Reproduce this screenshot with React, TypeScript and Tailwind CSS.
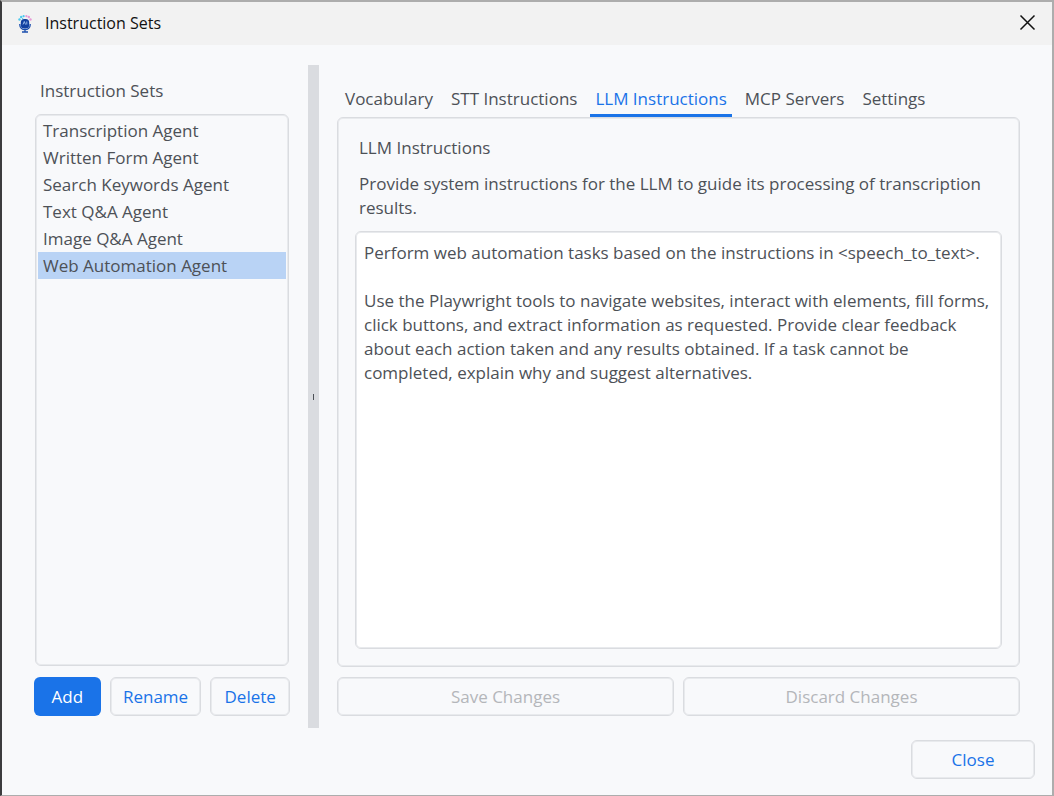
import { useState } from "react";

const agents = [
  "Transcription Agent",
  "Written Form Agent",
  "Search Keywords Agent",
  "Text Q&A Agent",
  "Image Q&A Agent",
  "Web Automation Agent",
];

const tabs = ["Vocabulary", "STT Instructions", "LLM Instructions", "MCP Servers", "Settings"];

const instructions = `Perform web automation tasks based on the instructions in <speech_to_text>.

Use the Playwright tools to navigate websites, interact with elements, fill forms, click buttons, and extract information as requested. Provide clear feedback about each action taken and any results obtained. If a task cannot be completed, explain why and suggest alternatives.`;

function MicIcon() {
  return (
    <svg width="14" height="18" viewBox="0 0 14 18" fill="none" aria-hidden="true">
      <g fill="#4cc9ee">
        <circle cx="1.5" cy="4.5" r="1.2" />
        <circle cx="3.2" cy="2" r="1.2" />
        <circle cx="5.6" cy="1.2" r="1.1" />
        <circle cx="4.6" cy="3.6" r="0.7" />
      </g>
      <g fill="#e79ad6">
        <circle cx="8.4" cy="1.2" r="1.1" />
        <circle cx="10.8" cy="2" r="1.2" />
        <circle cx="12.5" cy="4.5" r="1.2" />
      </g>
      <rect x="2.8" y="4" width="8.4" height="9.6" rx="3.6" fill="#1240a0" />
      <path d="M1.8 9v0.700c0 2.800 2.200 4.800 5.200 4.800s5.200-2 5.200-4.800V9M7 14.500V17M4 17h6" stroke="#1c4fae" strokeWidth="1.300" />
      <path d="M5 9.500 6.300 6.500 7.500 9.500M8.800 6.500v3" stroke="#b5d3fa" strokeWidth="0.800" />
    </svg>
  );
}

export default function App() {
  const [agent, setAgent] = useState("Web Automation Agent");
  const [tab, setTab] = useState("LLM Instructions");
  const outline = "h-[39px] rounded-md border border-[#dadce0] shadow-[inset_0_0_0_1px_#e8eaed]";

  return (
    <div className="flex min-h-screen flex-col border-x-2 border-t-2 border-b border-[#adadad] border-l-[#3c3c3e] bg-[#f8f9fb] font-['Open_Sans',sans-serif] text-[17px] leading-6 text-[#4d5157]">
      <header className="flex h-[43px] shrink-0 items-center bg-[#f2f2f2] px-4">
        <MicIcon />
        <h1 className="ml-[13px] pb-0.5 text-base text-[#111111]">Instruction Sets</h1>
        <button type="button" aria-label="Close window" className="ml-auto pb-0.5 text-[#111111]">
          <svg width="17" height="17" viewBox="0 0 17 17" fill="none" stroke="currentColor" strokeWidth="1.500">
            <path d="M1.500 1.500 15.500 15.500M15.500 1.500 1.500 15.500" />
          </svg>
        </button>
      </header>

      <main className="flex flex-1 pt-5 pr-8 pl-8">
        <section className="flex w-64 shrink-0 flex-col pt-3.5 pb-3">
          <h2 id="sets" className="pl-1.5">Instruction Sets</h2>
          <ul aria-labelledby="sets" className="mt-[11px] mr-px ml-px flex-1 rounded-md border border-[#dadce0] px-0.5 pt-0.5 shadow-[inset_0_0_0_1px_#e8eaed]">
            {agents.map((name) => (
              <li key={name}>
                <button
                  type="button"
                  onClick={() => setAgent(name)}
                  className={`block h-[27px] w-full pl-[5px] text-left ${name === agent ? "bg-[#b9d3f5]" : ""}`}
                >
                  {name}
                </button>
              </li>
            ))}
          </ul>
          <div className="mt-[11px] flex gap-[9px] text-[#1a73e8]">
            <button type="button" className="h-[39px] w-[67px] rounded-md bg-[#1a73e8] text-white">Add</button>
            <button type="button" className={`${outline} w-[92px]`}>Rename</button>
            <button type="button" className={`${outline} w-20`}>Delete</button>
          </div>
        </section>

        <div role="separator" aria-orientation="vertical" className="ml-[18px] flex w-[11px] shrink-0 items-center justify-center bg-[#dadce0]">
          <span className="h-1.5 w-px bg-[#4d5157]" />
        </div>

        <section className="ml-[18px] flex min-w-0 flex-1 flex-col pt-5 pb-3">
          <div role="tablist" className="flex gap-2 pl-[3px]">
            {tabs.map((name) => (
              <button
                key={name}
                type="button"
                role="tab"
                aria-selected={name === tab}
                onClick={() => setTab(name)}
                className={`h-8 border-b-3 px-[5px] pb-0.5 whitespace-nowrap ${name === tab ? "border-[#1a73e8] text-[#1a73e8]" : "border-transparent"}`}
              >
                {name}
              </button>
            ))}
          </div>
          <div role="tabpanel" className="flex flex-1 flex-col rounded-md border border-[#dadce0] px-[17px] pt-[18px] pb-[17px] shadow-[inset_0_0_0_1px_#e8eaed]">
            <label htmlFor="llm" className="pl-1">LLM Instructions</label>
            <p className="mt-3 pl-1">Provide system instructions for the LLM to guide its processing of transcription results.</p>
            <textarea
              id="llm"
              defaultValue={instructions}
              className="mt-[11px] flex-1 resize-none rounded-md border border-[#dadce0] bg-white px-2 py-[9px] shadow-[inset_0_0_0_1px_#e8eaed] outline-none"
            />
          </div>
          <div className="mt-2.5 flex gap-[9px] text-[#b4b6ba]">
            <button type="button" disabled className={`${outline} flex-1`}>Save Changes</button>
            <button type="button" disabled className={`${outline} flex-1`}>Discard Changes</button>
          </div>
        </section>
      </main>

      <footer className="flex justify-end pt-3 pr-[17px] pb-4">
        <button type="button" className={`${outline} w-[124px] text-[#1a73e8]`}>Close</button>
      </footer>
    </div>
  );
}
